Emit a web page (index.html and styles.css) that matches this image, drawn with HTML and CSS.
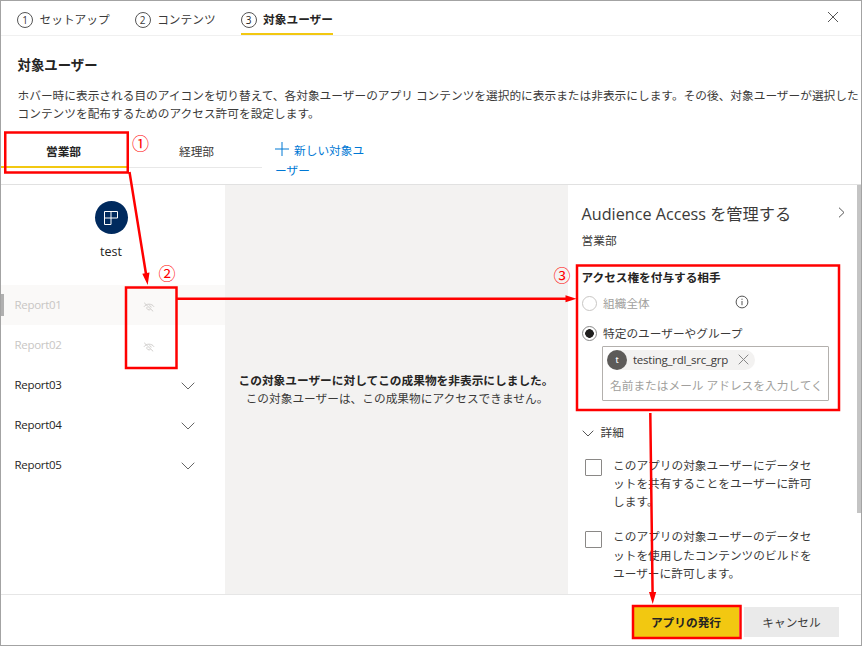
FILE: index.html
```html
<!DOCTYPE html>
<html lang="ja">
<head>
<meta charset="utf-8">
<title>対象ユーザー</title>
<link rel="stylesheet" href="styles.css">
</head>
<body>
<div class="dialog">
  <header class="steps">
    <div class="step"><span class="num">1</span><span>セットアップ</span></div>
    <div class="step"><span class="num">2</span><span>コンテンツ</span></div>
    <div class="step current"><span class="num">3</span><span>対象ユーザー</span></div>
    <svg class="close" width="12" height="12" viewBox="0 0 12 12"><path d="M1 1l10 10M11 1L1 11"/></svg>
  </header>
  <section class="intro">
    <h1>対象ユーザー</h1>
    <p>ホバー時に表示される目のアイコンを切り替えて、各対象ユーザーのアプリ コンテンツを選択的に表示または非表示にします。その後、対象ユーザーが選択した<br>コンテンツを配布するためのアクセス許可を設定します。</p>
  </section>
  <nav class="tabs">
    <div class="tab active">営業部</div>
    <div class="tab">経理部</div>
    <div class="add"><svg width="14" height="14" viewBox="0 0 14 14"><path d="M7 0v14M0 7h14"/></svg>新しい対象ユ<br>ーザー</div>
  </nav>
  <main class="body">
    <aside class="side">
      <div class="app">
        <div class="logo"><svg width="16" height="16" viewBox="0 0 16 16"><path d="M1.5 1.5h13v6.5h-13zM1.5 8v6.5h6.5V1.5"/></svg></div>
        <div class="app-name">test</div>
      </div>
      <div class="report hidden selected"><span>Report01</span><svg class="eye" width="12" height="10" viewBox="0 0 12 10"><path d="M1 4.8C3 1.3 9 1.3 11 4.8M1.2 .8l9 8.6M4 5a2.1 2.1 0 0 0 3.5 2.2M6.3 3.7a2 2 0 0 1 1.9 1.8"/></svg></div>
      <div class="report hidden"><span>Report02</span><svg class="eye" width="12" height="10" viewBox="0 0 12 10"><path d="M1 4.8C3 1.3 9 1.3 11 4.8M1.2 .8l9 8.6M4 5a2.1 2.1 0 0 0 3.5 2.2M6.3 3.7a2 2 0 0 1 1.9 1.8"/></svg></div>
      <div class="report"><span>Report03</span><svg class="chev" width="14" height="8" viewBox="0 0 14 8"><path d="M.7 .7L7 7 13.3 .7"/></svg></div>
      <div class="report"><span>Report04</span><svg class="chev" width="14" height="8" viewBox="0 0 14 8"><path d="M.7 .7L7 7 13.3 .7"/></svg></div>
      <div class="report"><span>Report05</span><svg class="chev" width="14" height="8" viewBox="0 0 14 8"><path d="M.7 .7L7 7 13.3 .7"/></svg></div>
    </aside>
    <section class="preview">
      <strong>この対象ユーザーに対してこの成果物を非表示にしました。</strong>
      <span>この対象ユーザーは、この成果物にアクセスできません。</span>
    </section>
    <section class="access">
      <div class="access-head"><h2>Audience Access を管理する</h2><svg width="7" height="11" viewBox="0 0 7 11"><path d="M1 .7l5 4.8-5 4.8"/></svg></div>
      <div class="group">営業部</div>
      <h3>アクセス権を付与する相手</h3>
      <div class="option off"><span class="radio"></span><span class="label">組織全体</span><svg class="info" width="14" height="14" viewBox="0 0 14 14"><circle cx="7" cy="7" r="5.9"/><path d="M7 6v4.2M7 3.7v1.2"/></svg></div>
      <div class="option"><span class="radio on"></span><span class="label">特定のユーザーやグループ</span></div>
      <div class="picker">
        <div class="chip"><span class="avatar">t</span><span class="chip-name">testing_rdl_src_grp</span><svg width="11" height="11" viewBox="0 0 11 11"><path d="M.7 .7l9.6 9.6M10.3 .7L.7 10.3"/></svg></div>
        <div class="placeholder">名前またはメール アドレスを入力してく</div>
      </div>
      <div class="details"><svg width="12" height="7" viewBox="0 0 12 7"><path d="M.7 .7L6 6 11.3 .7"/></svg>詳細</div>
      <div class="check"><span class="box"></span><p>このアプリの対象ユーザーにデータセ<br>ットを共有することをユーザーに許可<br>します。</p></div>
      <div class="check"><span class="box"></span><p>このアプリの対象ユーザーのデータセ<br>ットを使用したコンテンツのビルドを<br>ユーザーに許可します。</p></div>
    </section>
    <div class="scrollbar"></div>
  </main>
  <footer class="actions">
    <div class="button primary">アプリの発行</div>
    <div class="button">キャンセル</div>
  </footer>
  <svg class="notes" width="862" height="646" viewBox="0 0 862 646">
    <g class="frame">
      <rect x="5.25" y="132.5" width="122.5" height="40"/>
      <rect x="126" y="287.5" width="50.5" height="80.5"/>
      <rect x="577" y="265.5" width="262" height="144.5"/>
      <rect x="633" y="606" width="107.5" height="32"/>
      <path d="M129.5 172L146 274M176.5 298.7H568M650.3 413L652.6 594"/>
    </g>
    <path class="head" d="M142.3 273.7l7.2-1.2-1.8 12.5zM565.5 295.2v7l11-3.5zM649 592h7.2l-3.5 12z"/>
    <g class="mark"><text x="140.6" y="149.5">①</text><text x="167" y="279.5">②</text><text x="562" y="282">③</text></g>
  </svg>
</div>
</body>
</html>
```
FILE: styles.css
```css
* { box-sizing: border-box; }
body {
  margin: 0;
  color: #3b3a39;
  font: 11.7px/17.5px "Open Sans", "Noto Sans CJK JP", sans-serif;
}
h1, h2, h3, p { margin: 0; }
svg { fill: none; stroke: #555; stroke-width: 1; flex: none; }
.dialog {
  position: relative;
  width: 862px;
  height: 646px;
  border: 1px solid #a3a3a3;
  background: #fff;
  overflow: hidden;
  display: flex;
  flex-direction: column;
}
.steps {
  height: 35px;
  flex: none;
  border-bottom: 1px solid #f0f0f0;
  display: flex;
  align-items: flex-start;
  gap: 25px;
  padding: 0 22px 0 16px;
}
.step { display: flex; align-items: center; gap: 6.5px; height: 34px; padding-top: 4px; }
.num {
  width: 16px;
  height: 16px;
  border: 1px solid #555;
  border-radius: 50%;
  font-size: 10px;
  line-height: 14px;
  text-align: center;
}
.current { font-weight: 700; border-bottom: 2px solid #f2c811; color: #252423; padding-top: 6px; }
.current .num { font-weight: 400; }
.close { margin: 10px 0 0 auto; }
.intro { height: 97px; flex: none; padding: 20px 0 0 16.5px; white-space: nowrap; }
.intro h1 { font-size: 13.4px; line-height: 18px; color: #252423; margin-bottom: 13px; }
.tabs { height: 51px; flex: none; display: flex; align-items: flex-start; }
.tab {
  height: 35px;
  width: 133px;
  line-height: 36px;
  padding-left: 2px;
  text-align: center;
  border-bottom: 1px solid #e8e8e8;
}
.tab.active { width: 128px; padding: 0 3px 0 0; font-weight: 700; color: #252423; border-bottom: 2px solid #f2c811; }
.add { margin: 8px 0 0 13px; line-height: 19.5px; color: #0078d4; }
.add svg { stroke: #0078d4; margin-right: 5px; vertical-align: -1px; }
.body { height: 410px; flex: none; border-top: 1px solid #e1e1e1; display: flex; }
.side { width: 224px; flex: none; }
.app { height: 100px; padding: 16px 4px 0 0; display: flex; flex-direction: column; align-items: center; }
.logo { width: 33px; height: 33px; border-radius: 50%; background: #002a5e; display: grid; place-items: center; }
.logo svg { stroke: #fff; }
.app-name { margin-top: 9px; font-size: 12.5px; color: #252423; }
.report {
  height: 40px;
  display: flex;
  align-items: center;
  justify-content: space-between;
  padding: 0 30.5px 0 13.5px;
  font-size: 11.5px;
  letter-spacing: -.3px;
  color: #252423;
}
.report.hidden { color: #c8c6c4; padding-right: 70px; }
.report.selected { background: #faf9f8; border-left: 3px solid #b5b3b1; border-image: linear-gradient(transparent 25%, #b0b0b0 25%, #b0b0b0 75%, transparent 75%) 1; padding-left: 10.5px; }
.eye { stroke: #d0cecc; margin-top: 4px; }
.chev { stroke: #666; margin-top: 1px; }
.preview {
  width: 343px;
  flex: none;
  background: #f3f2f1;
  display: flex;
  flex-direction: column;
  align-items: center;
  justify-content: center;
  padding-right: 1px;
}
.preview span { padding-left: 2px; }
.preview strong { color: #252423; }
.access { width: 289px; flex: none; padding: 18px 13px 0 13.5px; }
.access-head { height: 22px; display: flex; align-items: center; justify-content: space-between; }
.access h2 { font-size: 16.2px; line-height: 22px; font-weight: 400; white-space: nowrap; }
.access-head svg { margin: -3px -1px 0 0; }
.group { margin-top: 7px; }
h3 { font-size: 11.65px; line-height: 18px; margin-top: 19px; color: #252423; }
.option { display: flex; align-items: center; height: 18px; margin-top: 8px; }
.option + .option { margin-top: 12px; }
.off { color: #a19f9d; }
.radio { width: 15px; height: 15px; border: 1px solid #888; border-radius: 50%; margin-right: 6.5px; }
.off .radio { border-color: #c8c6c4; }
.radio.on { background: radial-gradient(circle, #201f1e 4px, transparent 4.6px); }
.info { margin: -3px 0 0 85.5px; }
.picker {
  width: 227px;
  height: 55px;
  margin: 3px 0 0 20.5px;
  border: 1px solid #b3b0ad;
  border-radius: 1px;
  padding: 3px 4px;
  white-space: nowrap;
  overflow: hidden;
}
.chip {
  display: flex;
  align-items: center;
  width: 148px;
  height: 20px;
  border-radius: 10px;
  background: #f3f2f1;
}
.avatar {
  width: 20px;
  height: 20px;
  border-radius: 50%;
  background: #5d5b59;
  color: #fff;
  font-size: 8px;
  font-weight: 600;
  line-height: 19px;
  text-align: center;
}
.chip-name { width: 106px; padding-left: 6px; font-size: 11.5px; letter-spacing: -.25px; }
.chip svg { stroke: #888; margin-left: 5px; }
.placeholder { color: #a19f9d; margin: 7px 0 0 3px; }
.details { display: flex; align-items: center; gap: 7px; margin-top: 23.5px; height: 18px; }
.check { display: flex; gap: 11px; margin: 13.5px 0 0 3.5px; line-height: 18.3px; white-space: nowrap; }
.check + .check { margin-top: 17px; }
.box { width: 17px; height: 17px; margin-top: 3.5px; border: 1px solid #8a8886; border-radius: 1px; flex: none; }
.scrollbar { width: 4px; height: 328px; background: #c4c4c4; margin-left: auto; }
.actions {
  flex: 1;
  border-top: 1px solid #e6e6e6;
  display: flex;
  justify-content: flex-end;
  gap: 5px;
  padding: 12px 22px 0 0;
}
.button { width: 95px; height: 30px; line-height: 30px; text-align: center; background: #eaeaea; }
.primary { width: 106px; background: #f2c811; color: #252423; font-weight: 700; }
.notes { position: absolute; left: -1px; top: -1px; }
.frame { stroke: #f00; stroke-width: 2.5; }
.head { fill: #f00; stroke: none; }
.mark { fill: #f00; stroke: none; font-size: 17px; text-anchor: middle; font-family: "Noto Sans CJK JP", sans-serif; }
```
